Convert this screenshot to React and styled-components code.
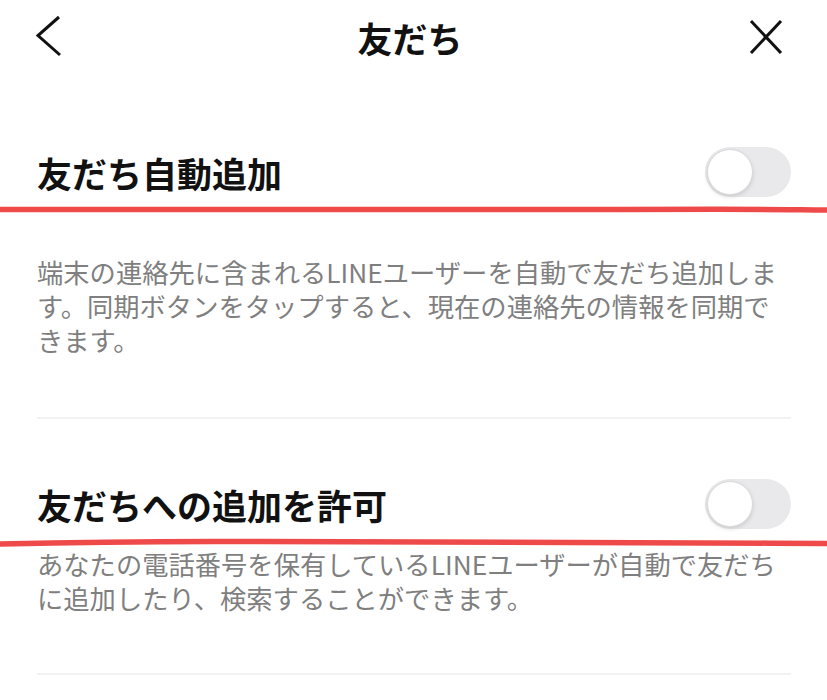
import React from 'react'
import styled, { createGlobalStyle } from 'styled-components'

const GlobalStyle = createGlobalStyle`
  html, body {
    margin: 0;
    padding: 0;
    background: #ffffff;
  }
  body {
    font-family: "Noto Sans CJK JP", "Noto Sans", sans-serif;
    color: #111111;
    -webkit-font-smoothing: antialiased;
  }
`

const sections = [
  {
    title: '友だち自動追加',
    lines: [
      '端末の連絡先に含まれるLINEユーザーを自動で友だち追加しま',
      'す。同期ボタンをタップすると、現在の連絡先の情報を同期で',
      'きます。',
    ],
    top: 67,
    descGap: 52,
    bottomGap: 60,
    wave: 'M0 5.5 C 200 5, 420 6, 620 5.5 S 780 5.7, 827 6',
  },
  {
    title: '友だちへの追加を許可',
    lines: [
      'あなたの電話番号を保有しているLINEユーザーが自動で友だち',
      'に追加したり、検索することができます。',
    ],
    top: 54,
    descGap: 12,
    bottomGap: 58,
    wave: 'M0 8 C 60 6.5, 160 5, 260 5.5 S 600 6, 827 7.5',
  },
]

function BackIcon() {
  return (
    <svg width="28" height="44" viewBox="0 0 28 44" fill="none">
      <polyline points="23,2 2,20.5 24,40" stroke="#111" strokeWidth="3" strokeLinejoin="miter" />
    </svg>
  )
}

function CloseIcon() {
  return (
    <svg width="36" height="36" viewBox="0 0 36 36" fill="none">
      <line x1="3" y1="2" x2="33" y2="34" stroke="#111" strokeWidth="3" />
      <line x1="33" y1="2" x2="3" y2="34" stroke="#111" strokeWidth="3" />
    </svg>
  )
}

function Toggle() {
  return (
    <Track>
      <Knob />
    </Track>
  )
}

function SettingSection({ title, lines, top, descGap, bottomGap, wave }) {
  return (
    <Section $top={top}>
      <Row>
        <RowTitle>{title}</RowTitle>
        <Toggle />
        <Mark viewBox="0 0 827 12" preserveAspectRatio="none">
          <path d={wave} stroke="#ef4141" strokeWidth="5.5" fill="none" strokeLinecap="round" />
        </Mark>
      </Row>
      <Desc $gap={descGap}>
        {lines.map((line, i) => (
          <DescLine key={i}>{line}</DescLine>
        ))}
      </Desc>
      <Divider $gap={bottomGap} />
    </Section>
  )
}

export default function App() {
  return (
    <>
      <GlobalStyle />
      <Page>
        <Header>
          <HeaderLeft>
            <BackIcon />
          </HeaderLeft>
          <HeaderTitle>友だち</HeaderTitle>
          <HeaderRight>
            <CloseIcon />
          </HeaderRight>
        </Header>
        {sections.map((s) => (
          <SettingSection key={s.title} {...s} />
        ))}
      </Page>
    </>
  )
}

const Page = styled.div`
  width: 827px;
  height: 700px;
  overflow: hidden;
  background: #fff;
`
const Header = styled.header`
  height: 74px;
  display: grid;
  grid-template-columns: 1fr auto 1fr;
  align-items: center;
  padding: 0 43px 0 36px;
`
const HeaderLeft = styled.div`
  justify-self: start;
  display: flex;
`
const HeaderRight = styled.div`
  justify-self: end;
  display: flex;
`
const HeaderTitle = styled.h1`
  margin: 0;
  font-size: 35px;
  font-weight: 700;
  line-height: 1;
  color: #111;
`
const Section = styled.section`
  padding-top: ${(p) => p.$top}px;
`
const Row = styled.div`
  position: relative;
  height: 62px;
  display: flex;
  align-items: center;
  justify-content: space-between;
  padding: 0 36px 0 37px;
`
const RowTitle = styled.h2`
  margin: 0;
  font-size: 35px;
  font-weight: 700;
  line-height: 1;
  color: #111;
`
const Mark = styled.svg`
  position: absolute;
  left: 0;
  top: calc(100% + 1px);
  width: 827px;
  height: 12px;
  filter: blur(0.6px);
  opacity: 0.95;
`
const Track = styled.div`
  width: 86px;
  height: 50px;
  box-sizing: border-box;
  border-radius: 25px;
  background: #e9e9eb;
  padding: 2px;
  display: flex;
  align-items: center;
`
const Knob = styled.div`
  width: 46px;
  height: 46px;
  box-sizing: border-box;
  border-radius: 50%;
  background: #fff;
  border: 1px solid #d9d9db;
  box-shadow: 0 2px 4px rgba(0, 0, 0, 0.12);
`
const Desc = styled.div`
  margin-top: ${(p) => p.$gap}px;
  padding: 0 36px 0 37px;
  font-size: 26.3px;
  line-height: 34px;
  color: #7f7f7f;
`
const DescLine = styled.div`
  white-space: nowrap;
`
const Divider = styled.hr`
  margin: ${(p) => p.$gap}px 36px 0 37px;
  border: 0;
  height: 2px;
  background: #f2f2f2;
`
